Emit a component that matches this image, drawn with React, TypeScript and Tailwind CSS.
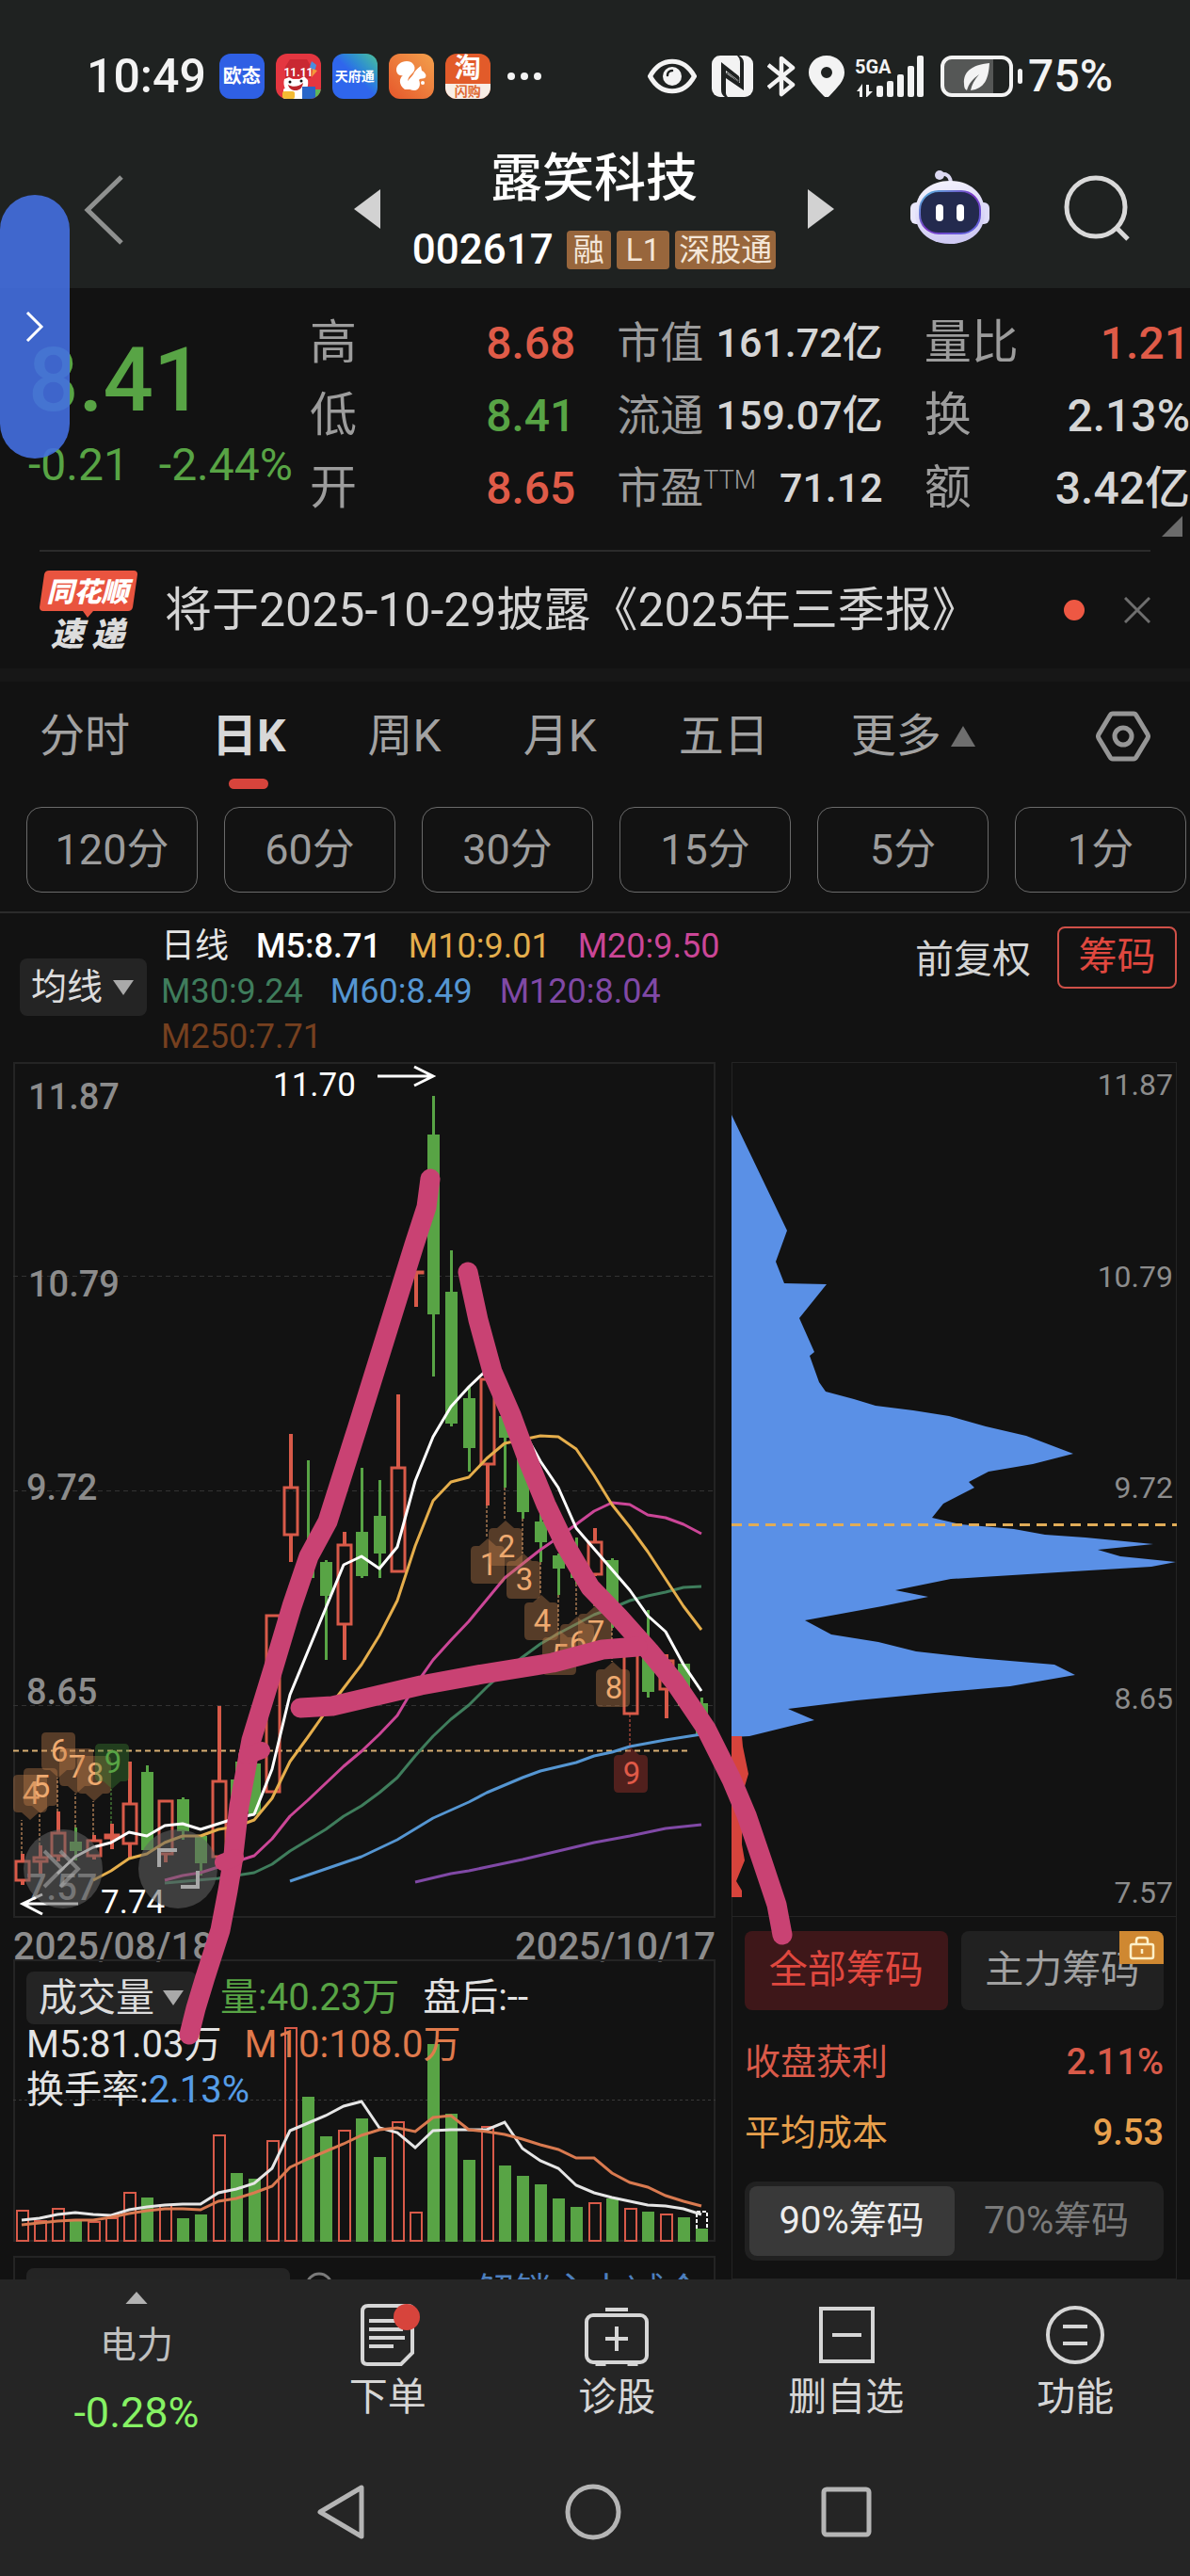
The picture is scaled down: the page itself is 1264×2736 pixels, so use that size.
import type { ReactNode } from "react";

const RED = "#d85a49";
const GREEN = "#58a445";
const STEP = 19;

type Candle = [kind: "r" | "g", high: number, low: number, top: number, bottom: number];

const candles: Candle[] = [
  ["r", 841, 874, 848, 870],
  ["r", 832, 862, 844, 850],
  ["r", 796, 849, 818, 844],
  ["g", 813, 848, 828, 838],
  ["r", 821, 847, 826, 844],
  ["r", 809, 836, 820, 825],
  ["r", 743, 845, 787, 831],
  ["g", 747, 837, 754, 837],
  ["r", 784, 850, 784, 842],
  ["g", 781, 826, 783, 817],
  ["g", 822, 864, 822, 851],
  ["r", 684, 845, 763, 845],
  ["g", 743, 840, 762, 820],
  ["g", 735, 799, 745, 799],
  ["r", 587, 776, 587, 776],
  ["r", 395, 531, 451, 503],
  ["g", 423, 555, 520, 548],
  ["g", 529, 635, 531, 567],
  ["r", 499, 635, 512, 598],
  ["g", 431, 548, 499, 546],
  ["g", 444, 548, 482, 522],
  ["r", 353, 542, 430, 542],
  ["r", 222, 260, 222, 225],
  ["g", 36, 334, 77, 268],
  ["g", 200, 387, 244, 384],
  ["g", 344, 435, 357, 410],
  ["r", 336, 471, 336, 428],
  ["g", 376, 452, 376, 399],
  ["g", 400, 485, 408, 478],
  ["g", 476, 531, 488, 510],
  ["g", 522, 566, 524, 538],
  ["g", 505, 554, 525, 548],
  ["r", 495, 546, 509, 545],
  ["g", 527, 601, 529, 590],
  ["r", 616, 693, 616, 693],
  ["g", 582, 675, 623, 669],
  ["r", 629, 697, 635, 667],
  ["g", 639, 684, 639, 684],
  ["g", 675, 714, 681, 714],
];

// [candle index, y]
const averages: { color: string; points: [number, number][] }[] = [
  {
    color: "#8049a6",
    points: [[22, 871], [24, 862], [25, 859], [26, 855], [28, 847], [30, 838], [32, 829], [34, 822], [36, 814], [38, 810]],
  },
  {
    color: "#5596d2",
    points: [[15, 870], [17, 857], [19, 844], [21, 826], [23, 803], [25, 786], [26, 776], [28, 760], [29, 753], [31, 744], [32, 737], [33, 733], [34, 727], [36, 720], [38, 714]],
  },
  {
    color: "#3f7d5c",
    points: [[8, 872], [11, 867], [13, 861], [14, 852], [15, 838], [17, 815], [18, 801], [19, 790], [20, 776], [21, 760], [22, 737], [23, 716], [24, 698], [25, 683], [26, 664], [27, 647], [28, 632], [29, 618], [30, 607], [31, 597], [32, 587], [33, 580], [34, 572], [35, 567], [36, 563], [37, 558], [38, 557]],
  },
  {
    color: "#cb4697",
    points: [[8, 869], [9, 864], [10, 861], [13, 843], [14, 825], [15, 801], [16, 784], [17, 766], [18, 748], [19, 732], [20, 714], [21, 694], [22, 662], [23, 635], [24, 614], [25, 594], [26, 571], [27, 548], [28, 533], [29, 518], [30, 505], [31, 491], [32, 477], [33, 468], [34, 470], [35, 481], [36, 484], [37, 491], [38, 501]],
  },
  {
    color: "#e5ae4c",
    points: [[4, 869], [5, 859], [6, 846], [7, 841], [8, 829], [9, 822], [10, 822], [11, 815], [12, 812], [13, 805], [14, 782], [15, 743], [16, 717], [17, 690], [18, 665], [19, 640], [20, 609], [21, 572], [22, 514], [23, 466], [24, 446], [25, 441], [26, 421], [27, 405], [28, 401], [29, 397], [30, 398], [31, 411], [32, 439], [33, 470], [34, 494], [35, 520], [36, 549], [37, 578], [38, 603]],
  },
  {
    color: "#ffffff",
    points: [[2, 862], [3, 844], [4, 834], [5, 829], [6, 818], [7, 822], [8, 811], [9, 809], [10, 815], [11, 809], [12, 803], [13, 799], [14, 751], [15, 672], [16, 626], [17, 580], [18, 534], [19, 525], [20, 538], [21, 515], [22, 445], [23, 398], [24, 366], [25, 345], [26, 327], [27, 353], [28, 390], [29, 424], [30, 452], [31, 495], [32, 517], [33, 539], [34, 561], [35, 588], [36, 605], [37, 640], [38, 668]],
  },
];

// Sequence counters: tip is the pointer's y, line is the wick end that it is tied to
const counters = [
  { n: 4, i: 0, x: 18, tip: 805, line: 841, dir: "down", tone: "amber" },
  { n: 5, i: 1, tip: 798, line: 832, dir: "down", tone: "amber" },
  { n: 6, i: 2, tip: 760, line: 796, dir: "down", tone: "amber" },
  { n: 7, i: 3, tip: 777, line: 813, dir: "down", tone: "amber" },
  { n: 8, i: 4, tip: 785, line: 821, dir: "down", tone: "amber" },
  { n: 9, i: 5, tip: 772, line: 809, dir: "down", tone: "green" },
  { n: 1, i: 26, tip: 506, line: 471, dir: "up", tone: "amber" },
  { n: 2, i: 27, tip: 487, line: 452, dir: "up", tone: "amber" },
  { n: 3, i: 28, tip: 522, line: 485, dir: "up", tone: "amber" },
  { n: 4, i: 29, tip: 566, line: 531, dir: "up", tone: "amber" },
  { n: 5, i: 30, tip: 603, line: 566, dir: "up", tone: "amber" },
  { n: 6, i: 31, tip: 589, line: 554, dir: "up", tone: "amber" },
  { n: 7, i: 32, tip: 578, line: 546, dir: "up", tone: "amber" },
  { n: 8, i: 33, tip: 637, line: 601, dir: "up", tone: "amber" },
  { n: 9, i: 34, tip: 728, line: 693, dir: "up", tone: "red" },
];

const tones: Record<string, { bg: string; text: string }> = {
  amber: { bg: "rgba(196,130,76,0.38)", text: "#efaa70" },
  green: { bg: "rgba(60,130,50,0.4)", text: "#58a445" },
  red: { bg: "rgba(160,50,45,0.45)", text: "#e05a48" },
};

const volumes: ["r" | "g", number][] = [
  ["r", 266], ["r", 277], ["r", 264], ["g", 277], ["r", 278], ["r", 274], ["r", 247], ["g", 253], ["r", 260], ["g", 275],
  ["g", 271], ["r", 186], ["g", 227], ["g", 233], ["r", 192], ["r", 72], ["g", 146], ["g", 188], ["r", 181], ["g", 169],
  ["g", 210], ["r", 172], ["r", 268], ["g", 90], ["g", 164], ["g", 213], ["r", 177], ["g", 219], ["g", 230], ["g", 239],
  ["g", 254], ["g", 263], ["r", 258], ["g", 254], ["r", 264], ["g", 268], ["r", 270], ["g", 274], ["g", 286],
];

const volumeM5 = [277, 275, 271, 269, 271, 272, 266, 263, 261, 260, 260, 248, 244, 238, 222, 182, 174, 166, 156, 151, 179, 184, 200, 182, 181, 181, 181, 173, 201, 214, 222, 240, 248, 253, 257, 261, 262, 265, 271];
const volumeM10 = [282, 280, 278, 277, 277, 274, 270, 267, 265, 265, 266, 257, 254, 248, 241, 221, 212, 204, 196, 187, 181, 179, 183, 168, 166, 181, 183, 186, 191, 197, 202, 211, 211, 227, 237, 242, 251, 257, 262];

const quotes = [
  {
    size: "text-[48px]",
    labelSize: "text-[50px]",
    rows: [
      { label: "高", value: "8.68", tone: "text-[#df5b48]" },
      { label: "低", value: "8.41", tone: "text-[#58a445]" },
      { label: "开", value: "8.65", tone: "text-[#df5b48]" },
    ],
  },
  {
    size: "text-[43px]",
    labelSize: "text-[46px]",
    rows: [
      { label: "市值", value: "161.72亿", tone: "text-[#d6d6d6]" },
      { label: "流通", value: "159.07亿", tone: "text-[#d6d6d6]" },
      { label: "市盈", sup: "TTM", value: "71.12", tone: "text-[#d6d6d6]" },
    ],
  },
  {
    size: "text-[48px]",
    labelSize: "text-[50px]",
    rows: [
      { label: "量比", value: "1.21", tone: "text-[#df5b48]" },
      { label: "换", value: "2.13%", tone: "text-[#d6d6d6]" },
      { label: "额", value: "3.42亿", tone: "text-[#d6d6d6]" },
    ],
  },
];

const cx = (i: number) => 9 + i * STEP;

function StatusBar() {
  return (
    <div className="flex h-[162px] items-center pl-[92px] pr-[82px] text-[#f3f3f3]">
      <span className="text-[50px] font-medium leading-none">10:49</span>
      <div className="ml-[14px] flex items-center gap-3 font-bold text-white">
        <span className="flex size-12 items-center justify-center rounded-xl bg-[#2f60e4] text-[20px]">欧态</span>
        <svg className="size-12 rounded-xl" viewBox="0 0 48 48">
          <rect width="48" height="48" fill="#e43640" />
          <path d="M10 14 15 6 33 6 37 13V26H10Z" fill="#c92832" />
          <path d="M38 8 43 12 41 20 36 14Z" fill="#4a8ee0" />
          <path d="M39 16 44 18 38 25Z" fill="#f29b3b" />
          <path d="M9 27 14 25 18 27H25L30 24 34 28C35 35 33 42 21 43 10 42 7 34 9 27Z" fill="#fff" />
          <path d="M8 38c5-5 19-6 25 0v10H8Z" fill="#fff" />
          <path d="M13 33c5 3 12 2 16-2-1 6-4 8-8 8s-7-2-8-6Z" fill="#bb262c" />
          <circle cx="15" cy="30" r="1.500" fill="#111" />
          <circle cx="27" cy="29" r="1.500" fill="#111" />
          <rect x="7" y="40" width="13" height="8" rx="2" fill="#f3bb33" />
          <rect x="28" y="35" width="14" height="13" fill="#2866c8" />
          <path d="M42 38h6v10h-6Z" fill="#5fb55a" />
          <text x="24" y="24" fontSize="12" fontWeight="700" textAnchor="middle" fill="#fff">11.11</text>
        </svg>
        <span className="flex size-12 items-center justify-center rounded-xl bg-linear-to-tr from-[#2f66ec] from-50% to-[#50c095] text-[14px]">
          天府通
        </span>
        <svg className="size-12 rounded-xl" viewBox="0 0 48 48">
          <defs>
            <linearGradient id="squirrel" x1="0" y1="1" x2="1" y2="0">
              <stop offset="0" stopColor="#e6572b" />
              <stop offset="1" stopColor="#f3a04c" />
            </linearGradient>
          </defs>
          <rect width="48" height="48" fill="url(#squirrel)" />
          <path
            d="M17 38C10 33 11 26 15 23c-4 1-7-2-7-6 0-5 5-9 11-9 6 0 10 5 8 10-2 4-7 6-7 12 0 4 2 7 4 8Z"
            fill="#fff"
          />
          <path
            d="M26 22c1-3 4-6 8-9l1 5c4 2 6 6 3 8-3 1-5 0-6 2 2 4 1 11-5 11-6 0-9-4-8-8 1-3 5-6 7-9Z"
            fill="#fff"
          />
          <circle cx="36" cy="31" r="2" fill="#fff" />
        </svg>
        <span className="flex size-12 flex-col overflow-hidden rounded-xl bg-[#e25b2a] text-center">
          <span className="h-8 text-[28px] leading-8">淘</span>
          <span className="h-4 bg-[#f8eee6] text-[14px] leading-4 text-[#df6a33]">闪购</span>
        </span>
      </div>
      <div className="ml-[18px] flex gap-1.5">
        <i className="size-2 rounded-full bg-[#f3f3f3]" />
        <i className="size-2 rounded-full bg-[#f3f3f3]" />
        <i className="size-2 rounded-full bg-[#f3f3f3]" />
      </div>

      <div className="ml-auto flex items-center">
        <svg className="h-[44px] w-[52px]" viewBox="0 0 52 44" fill="none">
          <path d="M2.500 22C14 1 38 1 49.500 22 38 43 14 43 2.500 22Z" stroke="#f3f3f3" strokeWidth="5" />
          <circle cx="26" cy="22" r="10" fill="#f3f3f3" />
          <path d="M21 21c0-3 2-5 5-5" stroke="#1f2221" strokeWidth="2.500" strokeLinecap="round" />
        </svg>
        <svg className="ml-4 size-[44px]" viewBox="0 0 44 44">
          <rect width="44" height="44" rx="9" fill="#f3f3f3" />
          <path d="M14 44C11 42 10 40 10 36V7L29 22V27L15 16V40Q15 42 17 44Z" fill="#1f2221" />
          <path d="M29 0C32 2 34 4 34 8V37L15 24V19L30 29V6Q30 3 27 0Z" fill="#1f2221" />
          <path d="M12 10 29 23V28L16 18V20L29 30" fill="none" stroke="#1f2221" strokeWidth="1" />
        </svg>
        <svg className="ml-[15px] h-[44px] w-[30px]" viewBox="0 0 30 44" fill="none" stroke="#f3f3f3" strokeWidth="4.500" strokeLinejoin="round">
          <path d="M1 10 27 31 15 41V3L27 13 1 34" />
        </svg>
        <svg className="ml-[14px] h-[44px] w-[38px]" viewBox="0 0 38 44">
          <path
            fillRule="evenodd"
            d="M19 0C8 0 0 8 0 18c0 9 7 15 16 25 2 2 4 2 6 0 9-10 16-16 16-25C38 8 30 0 19 0Zm0 12a6 6 0 1 1 0 12 6 6 0 0 1 0-12Z"
            fill="#f3f3f3"
          />
        </svg>
        <svg className="ml-[11px] h-[44px] w-[74px]" viewBox="0 0 74 44" fill="#f3f3f3">
          <text x="0" y="19" fontSize="20" fontWeight="700">5GA</text>
          <path d="M8 30v14H5V38H2ZM12 31h3v7h4l-7 7Z" />
          <rect x="23" y="32" width="7" height="12" rx="2" />
          <rect x="34" y="27" width="7" height="17" rx="2" />
          <rect x="45" y="20" width="7" height="24" rx="2" />
          <rect x="56" y="11" width="7" height="33" rx="2" />
          <rect x="66" y="0" width="7" height="44" rx="2" />
        </svg>
        <svg className="ml-[17px] h-[44px] w-[88px]" viewBox="0 0 88 44">
          <rect x="2" y="2" width="73" height="40" rx="10" fill="#1f2221" />
          <path d="M12 2H56V42H12a10 10 0 0 1-10-10V12A10 10 0 0 1 12 2Z" fill="#555756" />
          <rect x="2" y="2" width="73" height="40" rx="10" fill="none" stroke="#f3f3f3" strokeWidth="4" />
          <rect x="82" y="14" width="5" height="16" rx="2.500" fill="#f3f3f3" />
          <path d="M52 8C32 10 24 18 25 30c0 4 1 6 3 7 2-7 6-12 13-17-5 6-8 11-9 17 15-2 19-12 20-29Z" fill="#f3f3f3" />
        </svg>
        <span className="ml-[5px] text-[48px] font-medium leading-none">75%</span>
      </div>
    </div>
  );
}

function Robot() {
  return (
    <svg className="h-[80px] w-[86px]" viewBox="0 0 86 80">
      <defs>
        <linearGradient id="shell" x1="0" y1="0" x2="0.300" y2="1">
          <stop offset="0" stopColor="#f7f6ff" />
          <stop offset="1" stopColor="#cfcaf3" />
        </linearGradient>
        <linearGradient id="rim" x1="0" y1="0" x2="1" y2="1">
          <stop offset="0" stopColor="#56bfe0" />
          <stop offset="0.500" stopColor="#7a35c4" />
          <stop offset="1" stopColor="#5a6be0" />
        </linearGradient>
      </defs>
      <path d="M32 5c8-1 12 2 12 11" fill="none" stroke="#dcd9f2" strokeWidth="4" />
      <circle cx="32" cy="6" r="5" fill="#dcd9f2" />
      <rect x="1" y="35" width="14" height="23" rx="6" fill="#e9e7fb" />
      <rect x="71" y="35" width="14" height="23" rx="6" fill="#dedbf8" />
      <path d="M43 12C63 12 80 24 80 46 80 68 62 79 43 79S6 68 6 46C6 24 23 12 43 12Z" fill="url(#shell)" />
      <rect x="11" y="23" width="64" height="45" rx="20" fill="#232a4e" stroke="url(#rim)" strokeWidth="2" />
      <rect x="28" y="37" width="8" height="18" rx="4" fill="#fff" />
      <rect x="50" y="37" width="8" height="18" rx="4" fill="#fff" />
    </svg>
  );
}

function Header() {
  return (
    <header className="flex h-[144px] items-start justify-between pl-[88px] pr-[62px]">
      <button aria-label="返回" className="mt-6">
        <svg className="h-[74px] w-[46px]" viewBox="0 0 46 74" fill="none">
          <path d="M41 2 5 37 41 72" stroke="#8f9190" strokeWidth="5" />
        </svg>
      </button>
      <div className="flex pl-[162px]">
        <button aria-label="上一只" className="mt-[39px] h-[42px]">
          <svg className="h-[42px] w-[28px]" viewBox="0 0 28 42"><path d="M28 0V42L0 21Z" fill="#d2d2d2" /></svg>
        </button>
        <div className="flex w-[454px] flex-col items-center">
          <h1 className="h-[52px] text-[55px] font-medium leading-[54px] text-white">露笑科技</h1>
          <div className="mt-[26px] flex h-[50px] items-center gap-1.5 text-[33px] leading-[41px] text-[#f4e6d8]">
            <span className="mr-2 text-[44px] font-medium text-white">002617</span>
            <span className="rounded-sm bg-[#98663c] px-[7px]">融</span>
            <span className="rounded-sm bg-[#98663c] px-2.5">L1</span>
            <span className="rounded-sm bg-[#98663c] px-1">深股通</span>
          </div>
        </div>
        <button aria-label="下一只" className="mt-[39px] h-[42px]">
          <svg className="h-[42px] w-[28px]" viewBox="0 0 28 42"><path d="M0 0V42L28 21Z" fill="#d2d2d2" /></svg>
        </button>
      </div>
      <div className="flex items-center gap-[78px] pt-[18px]">
        <button aria-label="智能助手"><Robot /></button>
        <button aria-label="搜索">
          <svg className="h-[72px] w-[72px]" viewBox="0 0 72 72" fill="none" stroke="#d9d9d9" strokeWidth="5">
            <circle cx="34" cy="36" r="31" />
            <path d="M56 58 68 70" />
          </svg>
        </button>
      </div>
    </header>
  );
}

function Quote() {
  return (
    <section className="flex h-[278px] pt-5 font-medium">
      <div className="w-[329px] shrink-0 pl-[30px] pt-7 text-[#58a445]">
        <div className="text-[94px] leading-[100px]">8.41</div>
        <div className="flex gap-8 text-[48px] font-normal leading-[80px]">
          <span>-0.21</span>
          <span>-2.44%</span>
        </div>
      </div>
      <div className="flex flex-1 gap-11">
        {quotes.map((col, c) => (
          <dl key={c} className="flex-1">
            {col.rows.map((row) => (
              <div key={row.label} className="flex h-[77px] items-center justify-between whitespace-nowrap">
                <dt className={`${col.labelSize} flex font-normal leading-[77px] text-[#9c9c9c]`}>
                  {row.label}
                  {"sup" in row && <span className="text-[27px] font-light leading-[60px]">{row.sup}</span>}
                </dt>
                <dd className={`${col.size} ${row.tone} leading-[77px]`}>{row.value}</dd>
              </div>
            ))}
          </dl>
        ))}
      </div>
    </section>
  );
}

function News() {
  return (
    <section className="mx-[42px] flex h-[126px] items-center border-t-2 border-[#2b2b2b]">
      <svg className="h-[84px] w-[104px] shrink-0" viewBox="0 0 104 84">
        <path d="M10 0H100Q104 0 104 4L99 39Q98 43 94 43H57L51 50 46 43H4Q0 43 0 39L5 4Q6 0 10 0Z" fill="#e9543f" />
        <g fontWeight="900" fontStyle="italic" textAnchor="middle">
          <text x="51" y="33" fontSize="29" fill="#fff">同花顺</text>
          <text x="51" y="80" fontSize="35" fill="#dcdcdc">速 递</text>
        </g>
      </svg>
      <a href="#news" className="ml-[29px] whitespace-nowrap text-[50px] text-[#d4d4d4]">
        将于2025-10-29披露《2025年三季报》
      </a>
      <i className="ml-auto size-[22px] rounded-full bg-[#ee5843]" />
      <button aria-label="关闭" className="ml-[42px]">
        <svg className="size-7" viewBox="0 0 28 28" stroke="#6e6e6e" strokeWidth="3"><path d="M1 1 27 27M27 1 1 27" /></svg>
      </button>
    </section>
  );
}

function Tabs() {
  const tabs = ["分时", "日K", "周K", "月K", "五日"];
  const periods = ["120分", "60分", "30分", "15分", "5分", "1分"];
  return (
    <nav className="border-b-2 border-[#2b2b2b] pb-5">
      <div className="flex h-[133px] items-center px-[42px] pb-[18px] text-[48px] text-[#a2a2a2]">
        <div className="flex gap-[87px]">
          {tabs.map((tab) =>
            tab === "日K" ? (
              <button key={tab} className="relative font-bold text-[#d8d8d8]">
                {tab}
                <i className="absolute -bottom-5 left-1/2 h-[11px] w-[42px] -translate-x-1/2 rounded-full bg-[#d7443c]" />
              </button>
            ) : (
              <button key={tab}>{tab}</button>
            ),
          )}
          <button className="flex items-center gap-2.5">
            更多
            <svg className="h-[22px] w-[26px]" viewBox="0 0 26 22"><path d="M13 0 26 22H0Z" fill="#6e6e6e" /></svg>
          </button>
        </div>
        <button aria-label="设置" className="ml-auto">
          <svg className="h-[54px] w-[58px]" viewBox="0 0 58 54" fill="none" stroke="#969696" strokeWidth="5">
            <path d="M18 3H40Q42 3 43 5L55 25Q56 27 55 29L43 49Q42 51 40 51H18Q16 51 15 49L3 29Q2 27 3 25L15 5Q16 3 18 3Z" />
            <circle cx="29" cy="27" r="9" />
          </svg>
        </button>
      </div>
      <div className="flex gap-7 pl-7 pr-1">
        {periods.map((p) => (
          <button key={p} className="h-[91px] flex-1 rounded-2xl border border-[#6a6a6a] text-[45px] text-[#9c9c9c]">
            {p}
          </button>
        ))}
      </div>
    </nav>
  );
}

function Picker({ label, className }: { label: string; className: string }) {
  return (
    <div className="relative shrink-0 text-[#dcdcdc]">
      <select aria-label={label} className={`appearance-none rounded-lg bg-[#242424] ${className}`}>
        <option>{label}</option>
      </select>
      <svg className="pointer-events-none absolute right-[14px] top-1/2 h-4 w-[22px] -translate-y-1/2" viewBox="0 0 22 16">
        <path d="M0 0H22L11 16Z" fill="#a9a9a9" />
      </svg>
    </div>
  );
}

function Legend() {
  return (
    <section className="flex h-[158px] items-start pr-[14px]">
      <div className="ml-[21px] mt-[48px]">
        <Picker label="均线" className="h-[61px] w-[135px] pl-3 text-[38px]" />
      </div>
      <div className="ml-[15px] mt-[11px] text-[36px] leading-[48px]">
        <div className="flex gap-[29px]">
          <span className="text-[#e4e4e4]">日线</span>
          <span className="font-medium text-white">M5:8.71</span>
          <span className="text-[#e5ae4c]">M10:9.01</span>
          <span className="text-[#cb4697]">M20:9.50</span>
        </div>
        <div className="flex gap-[29px]">
          <span className="text-[#3f7d5c]">M30:9.24</span>
          <span className="text-[#5596d2]">M60:8.49</span>
          <span className="text-[#8049a6]">M120:8.04</span>
        </div>
        <div className="text-[#76401f]">M250:7.71</div>
      </div>
      <div className="ml-auto mt-[14px] flex items-end gap-7 text-[41px]">
        <button className="text-[#d4d4d4]">前复权</button>
        <button className="h-[66px] w-[127px] rounded-lg border-2 border-[#cf5048] text-[#e0483f]">筹码</button>
      </div>
    </section>
  );
}

function CandleChart() {
  return (
    <svg className="block h-auto w-full" viewBox="0 0 746 909">
      <rect x="1" y="1" width="744" height="907" fill="none" stroke="#242424" strokeWidth="2" />
      <g stroke="#333" strokeDasharray="5 4">
        <path d="M0 227.500H746M0 455.500H746M0 683.500H746" />
      </g>
      <g fontSize="38" fontWeight="500" fill="#8c8c8c">
        <text x="16" y="50">11.87</text>
        <text x="16" y="249">10.79</text>
        <text x="14" y="465">9.72</text>
        <text x="14" y="682">8.65</text>
        <text x="14" y="890">7.57</text>
      </g>
      <path d="M0 731.500H718" stroke="#d9b074" strokeWidth="2" strokeDasharray="6 4" />
      {candles.map(([kind, high, low, top, bottom], i) => {
        const x = cx(i);
        if (kind === "g") {
          return (
            <g key={i} fill={GREEN}>
              <rect x={x - 1} y={high} width="3" height={low - high} />
              <rect x={x - 6} y={top} width="13" height={bottom - top} />
            </g>
          );
        }
        return (
          <g key={i} fill={RED}>
            <rect x={x - 1} y={high} width="4" height={top - high} />
            <rect x={x - 1} y={bottom} width="4" height={low - bottom} />
            <rect x={x - 6} y={top + 1} width="14" height={Math.max(bottom - top - 2, 1)} fill="none" stroke={RED} strokeWidth="3" />
          </g>
        );
      })}
      {averages.map((line) => (
        <polyline
          key={line.color}
          points={line.points.map(([i, y]) => `${cx(i)},${y}`).join(" ")}
          fill="none"
          stroke={line.color}
          strokeWidth="3"
          strokeLinejoin="round"
        />
      ))}
      {counters.map((c) => {
        const x = c.x ?? cx(c.i) + 1;
        const s = c.dir === "down" ? -1 : 1;
        const tone = tones[c.tone];
        const near = c.tip + s * 8;
        const far = c.tip + s * 48;
        return (
          <g key={`${c.n}-${c.i}`}>
            <path d={`M${cx(c.i)} ${c.line}V${c.tip}`} stroke={tone.text} strokeDasharray="3 2" />
            <path
              d={`M${x} ${c.tip}L${x + 9} ${near}H${x + 13}Q${x + 18} ${near} ${x + 18} ${near + s * 5}V${far - s * 5}Q${x + 18} ${far} ${x + 13} ${far}H${x - 13}Q${x - 18} ${far} ${x - 18} ${far - s * 5}V${near + s * 5}Q${x - 18} ${near} ${x - 13} ${near}H${x - 9}Z`}
              fill={tone.bg}
            />
            <text x={x + 1} y={(near + far) / 2 + 11} fontSize="33" textAnchor="middle" fill={tone.text}>
              {c.n}
            </text>
          </g>
        );
      })}
      <g fill="none" stroke="#fff" strokeWidth="3">
        <path d="M387 15H446M426 5 446 15 426 25" />
        <path d="M69 894H10M31 884 10 894 31 905" />
      </g>
      <g fontSize="35" fill="#fff">
        <text x="276" y="36">11.70</text>
        <text x="93" y="904">7.74</text>
      </g>
      <g fill="rgba(98,98,98,0.550)">
        <circle cx="53" cy="857" r="42" />
        <circle cx="175" cy="857" r="42" />
      </g>
      <g fill="none" stroke="#a8a8a8" strokeWidth="4">
        <path d="M33 838 52 857 33 876M50 838 69 857 50 876" opacity="0.600" />
        <path d="M155 855V837H174M178 876H196V859" />
      </g>
    </svg>
  );
}

function VolumeChart() {
  const line = (ys: number[]) => ys.map((y, i) => `${cx(i)},${y}`).join(" ");
  return (
    <svg className="block h-auto w-full" viewBox="0 0 746 300">
      <rect x="1" y="1" width="744" height="298" fill="none" stroke="#242424" strokeWidth="2" />
      <path d="M0 149.500H746" stroke="#3a3a3a" strokeDasharray="3 3" />
      {volumes.map(([kind, top], i) =>
        kind === "g" ? (
          <rect key={i} x={cx(i) - 6} y={top} width="13" height={300 - top} fill={GREEN} />
        ) : (
          <rect key={i} x={cx(i) - 5} y={top + 1} width="12" height={298 - top} fill="none" stroke={RED} strokeWidth="2" />
        ),
      )}
      <path d="M726 286V268H737V286" fill="none" stroke="#fff" strokeWidth="2" strokeDasharray="4 2" />
      <polyline points={line(volumeM5)} fill="none" stroke="#e6e6e6" strokeWidth="3" />
      <polyline points={line(volumeM10)} fill="none" stroke="#d97a50" strokeWidth="3" />
    </svg>
  );
}

function ChipChart() {
  return (
    <svg className="block h-auto w-full" viewBox="0 0 473 909">
      <path
        d="M0 56 59 179 47 212 56 235 101 236 72 272 88 308 83 312 93 340 100 350 130 358 153 365 193 370 231 376 270 387 313 397 363 416 320 427 273 435 252 446 258 452 225 469 213 484 243 491 300 496 333 502 376 505 448 512 389 518 413 525 472 531 446 536 363 541 266 547 233 549 174 561 209 568 160 578 78 593 106 608 156 616 196 626 260 633 343 640 365 651 296 663 216 670 133 678 60 687 88 699 19 716 0 717Z"
        fill="#5a90e6"
      />
      <path d="M0 716H11L12 727 18 756 12 776 11 831 14 848 5 870 11 880V887H0Z" fill="#d7443c" />
      <path d="M0 491.500H473" stroke="#e0ac58" strokeWidth="3" strokeDasharray="11 7" />
      <g fontSize="32" fill="#8c8c8c" textAnchor="end">
        <text x="469" y="35">11.87</text>
        <text x="469" y="239">10.79</text>
        <text x="469" y="463">9.72</text>
        <text x="469" y="687">8.65</text>
        <text x="469" y="893">7.57</text>
      </g>
      <path d="M0 907.500H473" stroke="#242424" />
    </svg>
  );
}

function ChipPanel() {
  return (
    <div className="flex flex-col shadow-[inset_0_0_0_1px_#242424]">
      <ChipChart />
      <div className="flex flex-col px-[14px] pt-[14px]">
        <div className="flex gap-[14px] text-[41px]">
          <button className="h-[84px] flex-1 rounded-lg bg-[#3e1719] text-[#e0483f]">全部筹码</button>
          <button className="relative h-[84px] flex-1 rounded-lg bg-[#212121] text-[#a0a0a0]">
            主力筹码
            <span className="absolute right-0 top-0 flex h-[35px] w-[47px] items-center justify-center rounded-tr-lg bg-[#cf8831]">
              <svg className="h-7 w-7" viewBox="0 0 28 28" fill="none" stroke="#fdf0c8" strokeWidth="2.500">
                <rect x="2" y="10" width="24" height="15" rx="2" />
                <path d="M8 10V6Q8 3 11 3H17Q20 3 20 6V10M14 15V20" />
              </svg>
            </span>
          </button>
        </div>
        <dl className="mt-[18px] text-[38px] leading-[75px]">
          <div className="flex justify-between text-[#d95a49]">
            <dt>收盘获利</dt>
            <dd className="font-medium">2.11%</dd>
          </div>
          <div className="flex justify-between text-[#e8a04c]">
            <dt>平均成本</dt>
            <dd className="font-medium">9.53</dd>
          </div>
        </dl>
        <div className="mt-[14px] flex h-[84px] rounded-xl bg-[#212121] p-[5px] text-[40px]">
          <button className="flex-1 rounded-lg bg-[#393939] text-[#ececec]">90%筹码</button>
          <button className="flex-1 text-[#7a7a7a]">70%筹码</button>
        </div>
      </div>
    </div>
  );
}

function Strokes() {
  return (
    <svg
      className="pointer-events-none absolute left-0 top-0 h-auto w-full"
      viewBox="0 0 1264 1293"
      fill="none"
      stroke="#c94273"
      strokeWidth="21"
      strokeLinecap="round"
      strokeLinejoin="round"
    >
      <path d="M457 124 453 154 440 194 380 387 348 488 328 525 310 578 290 645 267 720 254 790 247 850 242 880 234 922 218 972 208 1005 201 1033" />
      <path d="M497 223 508 274 523 329 543 375 560 421 580 470 600 512 627 558 657 589 690 626 717 659 750 708 777 762 793 800 810 850 825 895 831 927" />
      <path d="M319 686 353 684 400 673 447 662 513 650 587 638 640 624 677 621" />
      <path d="M262 737 278 731M250 845 237 850" strokeWidth="18" />
    </svg>
  );
}

function Charts() {
  return (
    <section className="relative grid grid-cols-[746fr_473fr] gap-[17px] px-[14px]">
      <div>
        <CandleChart />
        <div className="flex h-11 justify-between pt-[13px] text-[40px] font-medium leading-[36px] text-[#8c8c8c]">
          <span>2025/08/18</span>
          <span>2025/10/17</span>
        </div>
        <div className="relative">
          <VolumeChart />
          <div className="absolute left-[14px] top-[14px] whitespace-nowrap text-[40px] leading-[48px] text-[#e4e4e4]">
            <div className="flex h-[53px] items-center gap-[25px]">
              <Picker label="成交量" className="h-[56px] w-[181px] pl-[13px] text-[41px]" />
              <span className="text-[#58a445]">量:40.23万</span>
              <span>盘后:--</span>
            </div>
            <div className="flex gap-6">
              <span>M5:81.03万</span>
              <span className="text-[#e07a4c]">M10:108.0万</span>
            </div>
            <div>
              换手率:<span className="text-[#559ce6]">2.13%</span>
            </div>
          </div>
        </div>
        <div className="mt-[15px] flex h-[25px] items-start justify-between overflow-hidden border-2 border-b-0 border-[#242424] pl-3 pr-3 pt-[11px]">
          <div className="flex gap-4">
            <div className="h-[60px] w-[280px] rounded-lg bg-[#242424]" />
            <svg className="mt-1 size-[30px]" viewBox="0 0 30 30"><circle cx="15" cy="15" r="13" fill="none" stroke="#7a7a7a" strokeWidth="3" /></svg>
          </div>
          <a href="#unlock" className="text-[40px] leading-[52px] text-[#4d7fbd]">解锁主力减仓</a>
        </div>
      </div>
      <ChipPanel />
      <Strokes />
    </section>
  );
}

function NavItem({ label, children }: { label: string; children: ReactNode }) {
  return (
    <button className="flex flex-1 flex-col items-center pt-[26px] text-[41px] leading-[66px] text-[#d6d6d6]">
      <svg className="h-[66px] w-[68px]" viewBox="0 0 68 66" fill="none" stroke="#d6d6d6" strokeWidth="4">
        {children}
      </svg>
      {label}
    </button>
  );
}

function BottomBar() {
  return (
    <footer className="bg-[#252525]">
      <div className="flex h-[178px]">
        <button className="flex w-[290px] flex-col items-center pt-[13px] text-[#c0c0c0]">
          <svg className="h-[18px] w-[32px]" viewBox="0 0 32 18"><path d="M16 0 32 18H0Z" fill="#b2b2b2" /></svg>
          <span className="mt-2 text-[39px] leading-[72px]">电力</span>
          <span className="text-[45px] leading-[72px] text-[#86f264]">-0.28%</span>
        </button>
        <NavItem label="下单">
          <path d="M13 2H56Q60 2 60 6V52L48 64H12Q7 64 7 59V8Q7 2 13 2Z" />
          <path d="M14 18H42M14 27H50M14 36H52M14 45H40" />
          <circle cx="54" cy="14" r="14" fill="#d7443c" stroke="none" />
        </NavItem>
        <NavItem label="诊股">
          <path d="M22 6H46M34 24V50M22 37H46" />
          <rect x="2" y="12" width="64" height="50" rx="7" />
          <path d="M17 62V66M51 62V66" strokeWidth="11" />
        </NavItem>
        <NavItem label="删自选">
          <path d="M7 5H62V61H7ZM19 33H50" />
        </NavItem>
        <NavItem label="功能">
          <circle cx="34" cy="33" r="29" />
          <path d="M21 24H47M21 42H47" />
        </NavItem>
      </div>
      <div className="flex h-[137px] items-center justify-between pl-[336px] pr-[338px]">
        <button aria-label="后退">
          <svg className="h-[60px] w-[52px]" viewBox="0 0 52 60" fill="none" stroke="#b5b5b5" strokeWidth="5" strokeLinejoin="round">
            <path d="M48 4V56L4 30Z" />
          </svg>
        </button>
        <button aria-label="主屏幕">
          <svg className="size-[60px]" viewBox="0 0 60 60" fill="none" stroke="#b5b5b5" strokeWidth="5"><circle cx="30" cy="30" r="27" /></svg>
        </button>
        <button aria-label="最近任务">
          <svg className="size-[54px]" viewBox="0 0 54 54" fill="none" stroke="#b5b5b5" strokeWidth="5"><rect x="3" y="3" width="48" height="48" rx="3" /></svg>
        </button>
      </div>
    </footer>
  );
}

export default function App() {
  return (
    <main className="relative overflow-hidden bg-[#121212] font-['Roboto','Noto_Sans_CJK_SC',sans-serif]">
      <div className="bg-[#1f2221]">
        <StatusBar />
        <Header />
      </div>
      <div className="relative">
        <Quote />
        <svg className="absolute bottom-[14px] right-2 h-[22px] w-[22px]" viewBox="0 0 22 22"><path d="M22 0V22H0Z" fill="#6b6b6b" /></svg>
      </div>
      <News />
      <div className="h-[14px] bg-[#171717]" />
      <Tabs />
      <Legend />
      <Charts />
      <BottomBar />
      <button
        aria-label="展开侧栏"
        className="absolute left-0 top-[207px] flex h-[280px] w-[74px] items-center justify-center rounded-full bg-[#446fe0]/90"
      >
        <svg className="h-8 w-5" viewBox="0 0 20 32" fill="none" stroke="#fff" strokeWidth="3"><path d="M2 1 17 16 2 31" /></svg>
      </button>
    </main>
  );
}
